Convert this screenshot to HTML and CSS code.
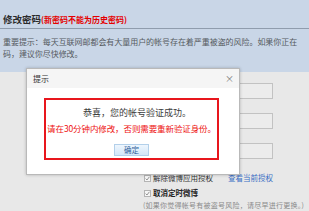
FILE: index.html
```html
<!DOCTYPE html>
<html lang="zh">
<head>
<meta charset="utf-8">
<title>修改密码</title>
<link rel="stylesheet" href="styles.css">
</head>
<body>
<div class="page">
  <div class="top">
    <div class="title-row"><span class="title">修改密码</span><span class="title-note">(新密码不能为历史密码)</span></div>
    <div class="notice">
      <p class="line">重要提示：每天互联网邮都会有大量用户的帐号存在着严重被盗的风险。如果你正在</p>
      <p class="line">码，建议你尽快修改。</p>
    </div>
  </div>
  <div class="bottom">
    <div class="fields">
      <div class="field"></div>
      <div class="field"></div>
      <div class="field"></div>
    </div>
    <div class="options">
      <div class="opt">
        <svg class="cb" width="7" height="7" viewBox="0 0 7 7"><rect x="0.5" y="0.5" width="6" height="6" fill="#f6f6f6" stroke="#b4b4b4"/><polyline points="1.6,3.6 3,5 5.4,1.8" fill="none" stroke="#8a8a8a" stroke-width="0.9"/></svg>
        <span class="opt-text">解除微博应用授权</span>
        <a class="link">查看当前授权</a>
      </div>
      <div class="opt">
        <svg class="cb" width="7" height="7" viewBox="0 0 7 7"><rect x="0.5" y="0.5" width="6" height="6" fill="#f6f6f6" stroke="#b4b4b4"/><polyline points="1.6,3.6 3,5 5.4,1.8" fill="none" stroke="#8a8a8a" stroke-width="0.9"/></svg>
        <span class="opt-text strong">取消定时微博</span>
      </div>
      <div class="hint">(如果你觉得帐号有被盗号风险，请尽早进行更换。)</div>
    </div>
  </div>

  <div class="dialog">
    <div class="dlg-head"><span class="dlg-title">提示</span><span class="dlg-close">×</span></div>
    <div class="dlg-body">
      <div class="msg-box">
        <p class="msg">恭喜，您的帐号验证成功。</p>
        <p class="msg-warn">请在30分钟内修改，否则需要重新验证身份。</p>
        <div class="btn-row"><span class="btn">确定</span></div>
      </div>
    </div>
  </div>
</div>
</body>
</html>
```
FILE: styles.css
```css
html, body {
  margin: 0;
  padding: 0;
}
body {
  width: 309px;
  height: 211px;
  overflow: hidden;
  font-family: "Noto Sans CJK SC", "Noto Sans", sans-serif;
  background: #e8e8e8;
}
.page {
  position: relative;
  width: 309px;
  height: 211px;
  overflow: hidden;
}
.top {
  height: 72px;
  background: #c9d6e7;
}
.title-row {
  padding: 10px 0 6px 3px;
  line-height: 12px;
  height: 12px;
  border-bottom: 1px solid #8f9cad;
  white-space: nowrap;
}
.title {
  font-size: 9.5px;
  font-weight: 700;
  color: #2b2b2b;
}
.title-note {
  font-size: 8px;
  font-weight: 700;
  color: #e50000;
}
.notice {
  margin-top: 7px;
  padding-left: 3px;
}
.line {
  margin: 0;
  font-size: 8px;
  line-height: 12px;
  color: #555a60;
  white-space: nowrap;
  letter-spacing: -0.05px;
}
.bottom {
  height: 139px;
  background: #e8e8e8;
}
.fields {
  padding-top: 11px;
  display: flex;
  flex-direction: column;
  gap: 14px;
}
.field {
  margin-left: 150px;
  width: 123px;
  height: 16px;
  box-sizing: border-box;
  border: 1px solid #c2c2c2;
  background: #ececec;
}
.options {
  margin-top: 13px;
  padding-left: 144px;
  display: flex;
  flex-direction: column;
}
.opt {
  display: flex;
  align-items: center;
  height: 12px;
  margin-bottom: 3px;
  white-space: nowrap;
}
.cb {
  flex: none;
  margin-right: 2px;
}
.opt-text {
  font-size: 7.5px;
  color: #333;
  line-height: 12px;
}
.strong {
  font-weight: 700;
  color: #222;
}
.link {
  margin-left: 15px;
  font-size: 7.5px;
  color: #3a6fc4;
  line-height: 12px;
}
.hint {
  margin: -2px 0 0 -1px;
  font-size: 7px;
  line-height: 10px;
  color: #8a8a8a;
  white-space: nowrap;
  letter-spacing: 0.25px;
}
.dialog {
  position: absolute;
  left: 26px;
  top: 68px;
  width: 214px;
  height: 107px;
  box-sizing: border-box;
  border: 1px solid #b9b9b9;
  background: #ffffff;
  box-shadow: 0 0 3px rgba(0, 0, 0, 0.22);
}
.dlg-head {
  height: 19px;
  display: flex;
  justify-content: space-between;
  align-items: center;
  padding: 0 5px 0 6px;
  background: #f5f5f5;
}
.dlg-title {
  font-size: 8px;
  color: #333;
}
.dlg-close {
  font-size: 9px;
  color: #777;
  line-height: 10px;
}
.dlg-body {
  padding: 10px 0 0 17px;
}
.msg-box {
  width: 175px;
  height: 62px;
  box-sizing: border-box;
  border: 2px solid #e8161d;
  padding-top: 7px;
  text-align: center;
}
.msg {
  margin: 0;
  padding-left: 11px;
  font-size: 9px;
  line-height: 12px;
  color: #3c3c3c;
  white-space: nowrap;
}
.msg-warn {
  margin: 3px 0 0;
  font-size: 8.5px;
  line-height: 12px;
  color: #ee1111;
  white-space: nowrap;
  letter-spacing: -0.1px;
}
.btn-row {
  margin-top: 10px;
  display: flex;
  justify-content: center;
}
.btn {
  display: block;
  width: 35px;
  height: 12px;
  box-sizing: border-box;
  border: 1px solid #b3d0ea;
  background: linear-gradient(#eef6fd, #d3e7f8);
  font-size: 7.5px;
  line-height: 10px;
  text-align: center;
  color: #2f5f9a;
}
```
